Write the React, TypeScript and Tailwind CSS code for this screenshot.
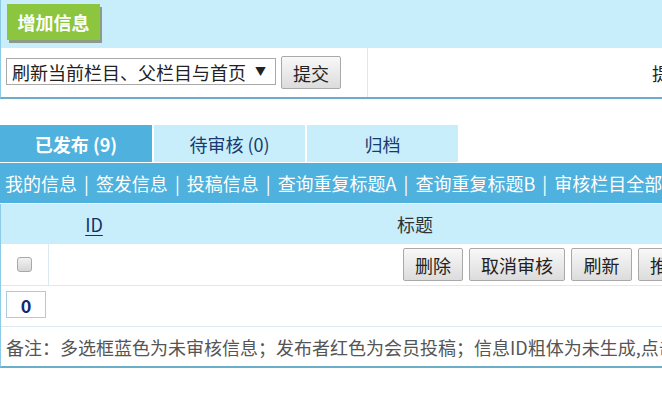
import React from "react";

const links = ["我的信息", "签发信息", "投稿信息", "查询重复标题A", "查询重复标题B", "审核栏目全部信息"];

export default function App() {
  return (
    <div className="w-[662px] h-[406px] overflow-hidden bg-white font-['Microsoft_YaHei','Noto_Sans_CJK_SC',sans-serif] text-[18px] leading-none text-[#222] whitespace-nowrap">
      {/* top box */}
      <div className="border-l border-[#8ccbe6] border-b-2 border-b-[#6aaec8]">
        <div className="h-[48px] bg-[#c8eefc] pl-[6px] pt-[4px]">
          <div className="w-[93px] h-[36px] bg-[#8cc63e] shadow-[2px_3px_0_#8e9a88] text-white font-bold flex items-center justify-center text-[18px]">
            增加信息
          </div>
        </div>
        <div className="h-[49px] flex">
          <div className="w-[367px] shrink-0 border-r border-[#d4ecf8] flex items-start pl-[5px] pt-[8px] gap-[5px]">
            <div className="mt-[2px] w-[270px] shrink-0 h-[27px] border border-[#a9a9a9] bg-white flex items-center justify-between pl-[5px] pr-[9px]">
              <span>刷新当前栏目、父栏目与首页</span>
              <span className="text-[11px]">▼</span>
            </div>
            <div className="w-[60px] shrink-0 h-[33px] border border-[#a9a9a9] rounded-[2px] bg-gradient-to-b from-[#f8f8f8] to-[#dcdcdc] flex items-center justify-center">
              提交
            </div>
          </div>
          <div className="shrink-0 flex items-center pl-[284px]">提示</div>
        </div>
      </div>

      <div className="h-[26px]" />

      {/* tabs */}
      <div className="flex gap-[2px] h-[37px]">
        <div className="w-[152px] shrink-0 bg-[#4fb1dd] text-white font-bold flex items-center justify-center">已发布 (9)</div>
        <div className="w-[151px] shrink-0 bg-[#c8eefc] text-[#183a6e] flex items-center justify-center">待审核 (0)</div>
        <div className="w-[151px] shrink-0 bg-[#c8eefc] text-[#183a6e] flex items-center justify-center">归档</div>
      </div>
      <div className="h-[1px]" />
      <div className="h-[40px] bg-[#4fb1dd] text-white flex items-center pl-[5px]">
        {links.map((l, i) => (
          <React.Fragment key={l}>
            {i > 0 && <span className="mx-[7px]">|</span>}
            <span>{l}</span>
          </React.Fragment>
        ))}
      </div>

      {/* table */}
      <div className="border-l border-[#8ccbe6] border-b-2 border-b-[#6aaec8] mt-[1px]">
        <div className="h-[40px] bg-[#c8eefc] flex items-center">
          <div className="w-[48px] shrink-0" />
          <div className="w-[90px] shrink-0 flex justify-center">
            <span className="underline text-[#13306b] underline-offset-[3px]">ID</span>
          </div>
          <div className="w-[552px] shrink-0 flex justify-center text-[#333]">标题</div>
        </div>
        <div className="h-[42px] flex border-b border-[#dbeaf2]">
          <div className="w-[48px] shrink-0 border-r border-[#dbeaf2] flex items-center justify-center">
            <div className="w-[15px] h-[15px] rounded-[3px] border border-[#a8a8a8] bg-gradient-to-b from-[#f2f2f2] to-[#d6d6d6]" />
          </div>
          <div className="shrink-0 flex items-center pl-[354px] gap-[6px]">
            <Btn w="w-[60px]">删除</Btn>
            <Btn w="w-[96px]">取消审核</Btn>
            <Btn w="w-[61px]">刷新</Btn>
            <Btn w="w-[60px]">推送</Btn>
          </div>
        </div>
        <div className="h-[41px] flex items-start pt-[5px] pl-[5px] border-b border-[#dbeaf2]">
          <div className="w-[40px] h-[27px] border border-[#a9cde0] flex items-center justify-center font-bold text-[#0d2a7a]">0</div>
        </div>
        <div className="h-[39px] flex items-center pl-[5px] text-[#555]">
          备注：多选框蓝色为未审核信息；发布者红色为会员投稿；信息ID粗体为未生成,点击ID可查看
        </div>
      </div>
    </div>
  );
}

function Btn({ w, children }: { w: string; children: React.ReactNode }) {
  return (
    <div className={`${w} h-[33px] shrink-0 border border-[#a9a9a9] rounded-[2px] bg-gradient-to-b from-[#f8f8f8] to-[#dcdcdc] flex items-center justify-center`}>
      {children}
    </div>
  );
}
